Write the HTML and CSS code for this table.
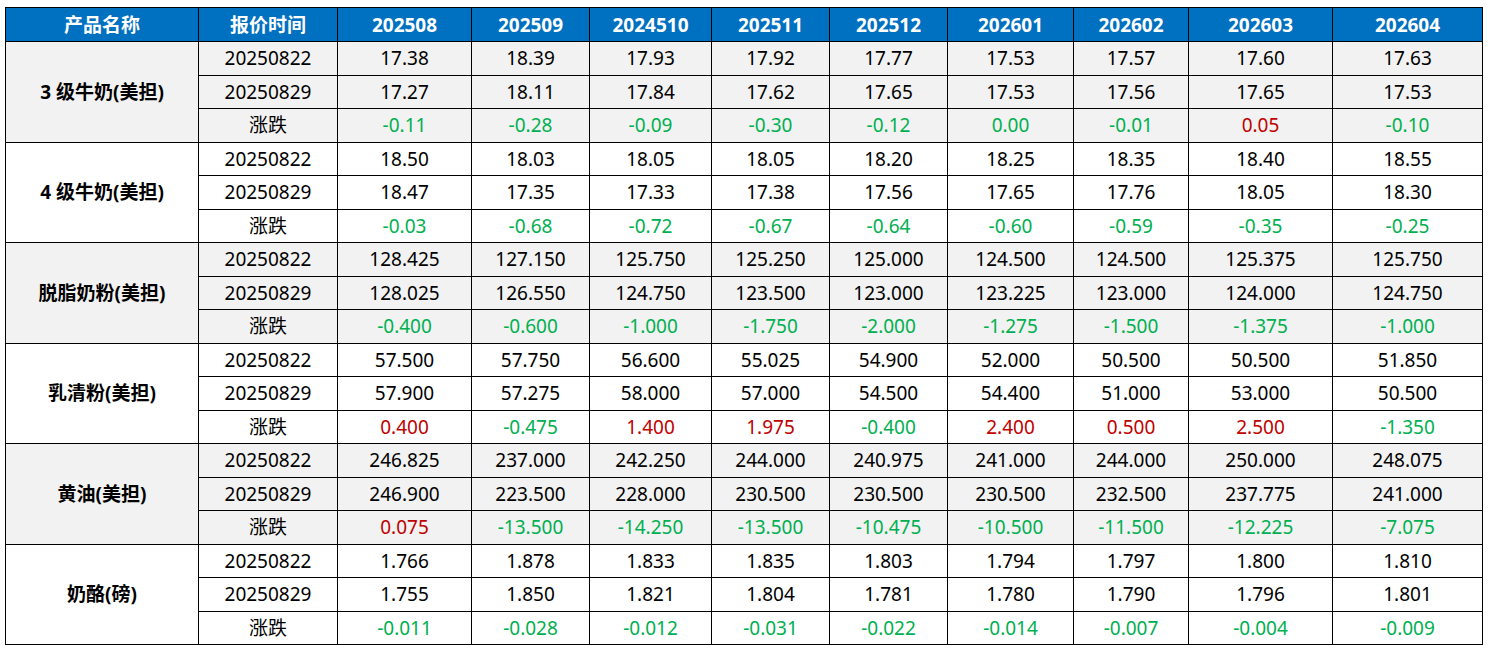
FILE: index.html
```html
<!DOCTYPE html>
<html lang="zh-CN">
<head>
<meta charset="utf-8">
<title>乳制品报价</title>
<link rel="stylesheet" href="styles.css">
</head>
<body>
<table class="price-table">
  <colgroup>
    <col class="c-name"><col class="c-date">
    <col class="c1"><col class="c2"><col class="c3"><col class="c4"><col class="c5">
    <col class="c6"><col class="c7"><col class="c8"><col class="c9">
  </colgroup>
  <thead>
    <tr class="head">
      <th>产品名称</th><th>报价时间</th><th>202508</th><th>202509</th><th>2024510</th><th>202511</th><th>202512</th><th>202601</th><th>202602</th><th>202603</th><th>202604</th>
    </tr>
  </thead>
  <tbody class="grp gray">
    <tr><td class="name" rowspan="3">3 级牛奶(美担)</td><td>20250822</td><td>17.38</td><td>18.39</td><td>17.93</td><td>17.92</td><td>17.77</td><td>17.53</td><td>17.57</td><td>17.60</td><td>17.63</td></tr>
    <tr><td>20250829</td><td>17.27</td><td>18.11</td><td>17.84</td><td>17.62</td><td>17.65</td><td>17.53</td><td>17.56</td><td>17.65</td><td>17.53</td></tr>
    <tr><td>涨跌</td><td class="dn">-0.11</td><td class="dn">-0.28</td><td class="dn">-0.09</td><td class="dn">-0.30</td><td class="dn">-0.12</td><td class="dn">0.00</td><td class="dn">-0.01</td><td class="up">0.05</td><td class="dn">-0.10</td></tr>
  </tbody>
  <tbody class="grp">
    <tr><td class="name" rowspan="3">4 级牛奶(美担)</td><td>20250822</td><td>18.50</td><td>18.03</td><td>18.05</td><td>18.05</td><td>18.20</td><td>18.25</td><td>18.35</td><td>18.40</td><td>18.55</td></tr>
    <tr><td>20250829</td><td>18.47</td><td>17.35</td><td>17.33</td><td>17.38</td><td>17.56</td><td>17.65</td><td>17.76</td><td>18.05</td><td>18.30</td></tr>
    <tr><td>涨跌</td><td class="dn">-0.03</td><td class="dn">-0.68</td><td class="dn">-0.72</td><td class="dn">-0.67</td><td class="dn">-0.64</td><td class="dn">-0.60</td><td class="dn">-0.59</td><td class="dn">-0.35</td><td class="dn">-0.25</td></tr>
  </tbody>
  <tbody class="grp gray">
    <tr><td class="name" rowspan="3">脱脂奶粉(美担)</td><td>20250822</td><td>128.425</td><td>127.150</td><td>125.750</td><td>125.250</td><td>125.000</td><td>124.500</td><td>124.500</td><td>125.375</td><td>125.750</td></tr>
    <tr><td>20250829</td><td>128.025</td><td>126.550</td><td>124.750</td><td>123.500</td><td>123.000</td><td>123.225</td><td>123.000</td><td>124.000</td><td>124.750</td></tr>
    <tr><td>涨跌</td><td class="dn">-0.400</td><td class="dn">-0.600</td><td class="dn">-1.000</td><td class="dn">-1.750</td><td class="dn">-2.000</td><td class="dn">-1.275</td><td class="dn">-1.500</td><td class="dn">-1.375</td><td class="dn">-1.000</td></tr>
  </tbody>
  <tbody class="grp">
    <tr><td class="name" rowspan="3">乳清粉(美担)</td><td>20250822</td><td>57.500</td><td>57.750</td><td>56.600</td><td>55.025</td><td>54.900</td><td>52.000</td><td>50.500</td><td>50.500</td><td>51.850</td></tr>
    <tr><td>20250829</td><td>57.900</td><td>57.275</td><td>58.000</td><td>57.000</td><td>54.500</td><td>54.400</td><td>51.000</td><td>53.000</td><td>50.500</td></tr>
    <tr><td>涨跌</td><td class="up">0.400</td><td class="dn">-0.475</td><td class="up">1.400</td><td class="up">1.975</td><td class="dn">-0.400</td><td class="up">2.400</td><td class="up">0.500</td><td class="up">2.500</td><td class="dn">-1.350</td></tr>
  </tbody>
  <tbody class="grp gray">
    <tr><td class="name" rowspan="3">黄油(美担)</td><td>20250822</td><td>246.825</td><td>237.000</td><td>242.250</td><td>244.000</td><td>240.975</td><td>241.000</td><td>244.000</td><td>250.000</td><td>248.075</td></tr>
    <tr><td>20250829</td><td>246.900</td><td>223.500</td><td>228.000</td><td>230.500</td><td>230.500</td><td>230.500</td><td>232.500</td><td>237.775</td><td>241.000</td></tr>
    <tr><td>涨跌</td><td class="up">0.075</td><td class="dn">-13.500</td><td class="dn">-14.250</td><td class="dn">-13.500</td><td class="dn">-10.475</td><td class="dn">-10.500</td><td class="dn">-11.500</td><td class="dn">-12.225</td><td class="dn">-7.075</td></tr>
  </tbody>
  <tbody class="grp">
    <tr><td class="name" rowspan="3">奶酪(磅)</td><td>20250822</td><td>1.766</td><td>1.878</td><td>1.833</td><td>1.835</td><td>1.803</td><td>1.794</td><td>1.797</td><td>1.800</td><td>1.810</td></tr>
    <tr><td>20250829</td><td>1.755</td><td>1.850</td><td>1.821</td><td>1.804</td><td>1.781</td><td>1.780</td><td>1.790</td><td>1.796</td><td>1.801</td></tr>
    <tr><td>涨跌</td><td class="dn">-0.011</td><td class="dn">-0.028</td><td class="dn">-0.012</td><td class="dn">-0.031</td><td class="dn">-0.022</td><td class="dn">-0.014</td><td class="dn">-0.007</td><td class="dn">-0.004</td><td class="dn">-0.009</td></tr>
  </tbody>
</table>
</body>
</html>
```
FILE: styles.css
```css
html, body {
  margin: 0;
  background: #ffffff;
}
body {
  padding: 7px 0 0 5px;
  font-family: "Noto Sans", "Noto Sans CJK SC", sans-serif;
  color: #000000;
}
.price-table {
  border-collapse: collapse;
  table-layout: fixed;
  width: 1477px;
  font-size: 19px;
}
.c-name { width: 193px; }
.c-date { width: 139px; }
.c1 { width: 134px; }
.c2 { width: 118px; }
.c3 { width: 122px; }
.c4 { width: 118px; }
.c5 { width: 118px; }
.c6 { width: 126px; }
.c7 { width: 115px; }
.c8 { width: 144px; }
.c9 { width: 150px; }

.price-table th,
.price-table td {
  border: 1px solid #000000;
  padding: 0;
  text-align: center;
  vertical-align: middle;
  line-height: 20px;
  white-space: nowrap;
}
.head th {
  height: 33px;
  background: #0070c0;
  color: #ffffff;
  font-weight: 700;
  font-size: 19px;
}
.grp td {
  height: 32.5px;
}
.gray td {
  background: #f2f2f2;
}
.name {
  font-weight: 700;
}
.dn { color: #00b050; }
.up { color: #c00000; }
```
